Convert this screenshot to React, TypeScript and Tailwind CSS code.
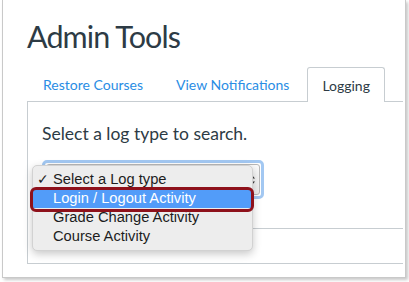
import React from "react";

export default function App() {
  return (
    <div
      className="relative w-[409px] h-[282px] bg-white overflow-hidden"
      style={{ fontFamily: "Lato, 'Open Sans', sans-serif" }}
    >
      <div className="ml-[2px] w-[404px] h-[278px] border-l border-r border-b border-[#c9c9c9] shadow-[2px_2px_3px_rgba(0,0,0,0.22)] pl-[24px] pt-[16px]">
        <h1 className="text-[30.5px] leading-[40px] tracking-[-0.9px] text-[#2d3b45] font-normal">Admin Tools</h1>
        <div className="mt-[11px] flex items-end w-[376px] pl-[1px] gap-[3px] relative z-10 -mb-px">
          <div className="h-[35px] px-[15px] flex items-center text-[14px] text-[#2a8de4]">Restore Courses</div>
          <div className="h-[35px] px-[15px] flex items-center text-[14px] text-[#2a8de4]">View Notifications</div>
          <div className="h-[35px] px-[14px] flex items-center text-[14px] text-[#2d3b45] bg-white border-t border-l border-r border-[#c7cdd1] rounded-t-[3px]">Logging</div>
        </div>
        <div className="w-[376px] h-[163px] border-l border-t border-b border-[#c7cdd1] pt-[20px] pl-[14px]">
          <div className="text-[17.5px] leading-[24px] text-[#2d3b45]">Select a log type to search.</div>
          <div className="mt-[14px] w-[222px] h-[39px] rounded-[5px] border-[3px] border-[#a3c8f2] p-[1px]">
            <div className="h-full rounded-[3px] border border-[#b8b8b8] bg-gradient-to-b from-[#fbfbfb] to-[#ececec] flex items-center justify-end pr-[3px]">
              <svg width="8" height="14" viewBox="0 0 8 14">
                <path d="M1 5.5 L4 2 L7 5.5 Z" fill="#333" />
                <path d="M1 8.5 L4 12 L7 8.5 Z" fill="#333" />
              </svg>
            </div>
          </div>
          <div className="mt-[29px] border-t border-[#c7cdd1]" />
        </div>
      </div>

      <div
        className="absolute left-[32px] top-[165px] w-[221px] h-[86px] rounded-[5px] bg-[#ededed] border border-[#d2d2d2] shadow-[0_3px_8px_rgba(0,0,0,0.22)] pt-[4px] text-[14.7px] text-[#1d1d1d]"
        style={{ fontFamily: "'Liberation Sans', Arial, sans-serif" }}
      >
        <div className="h-[19px] flex items-center relative pl-[20px]">
          <span className="absolute left-[4px] text-[14px]">✓</span>
          Select a Log type
        </div>
        <div className="h-[19px] flex items-center pl-[20px] bg-[#529cf9] text-white mx-0">Login / Logout Activity</div>
        <div className="h-[19px] flex items-center pl-[20px]">Grade Change Activity</div>
        <div className="h-[19px] flex items-center pl-[20px]">Course Activity</div>
      </div>
      <div className="absolute left-[30px] top-[187px] w-[224px] h-[25px] rounded-[6px] border-[3px] border-[#8e111b]" />
    </div>
  );
}
